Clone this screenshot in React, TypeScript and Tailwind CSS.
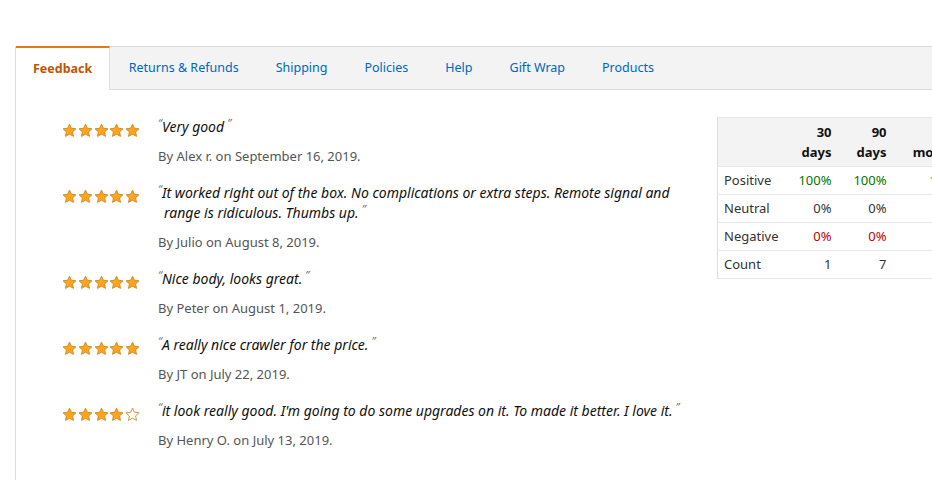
const TABS = ['Feedback', 'Returns & Refunds', 'Shipping', 'Policies', 'Help', 'Gift Wrap', 'Products']

type Review = { stars: number; text: string; by: string; date: string }

const REVIEWS: Review[] = [
  { stars: 5, text: 'Very good', by: 'Alex r.', date: 'September 16, 2019' },
  {
    stars: 5,
    text: 'It worked right out of the box. No complications or extra steps. Remote signal and range is ridiculous. Thumbs up.',
    by: 'Julio',
    date: 'August 8, 2019',
  },
  { stars: 5, text: 'Nice body, looks great.', by: 'Peter', date: 'August 1, 2019' },
  { stars: 5, text: 'A really nice crawler for the price.', by: 'JT', date: 'July 22, 2019' },
  {
    stars: 4,
    text: "it look really good. I'm going to do some upgrades on it. To made it better. I love it.",
    by: 'Henry O.',
    date: 'July 13, 2019',
  },
]

const ROWS = [
  { label: 'Positive', a: '100%', b: '100%', c: '100%', tone: 'text-[#007600]' },
  { label: 'Neutral', a: '0%', b: '0%', c: '0%', tone: 'text-[#333]' },
  { label: 'Negative', a: '0%', b: '0%', c: '0%', tone: 'text-[#c40000]' },
  { label: 'Count', a: '1', b: '7', c: '7', tone: 'text-[#333]' },
]

function Star({ filled }: { filled: boolean }) {
  return (
    <svg width="15" height="15" viewBox="0 0 24 24">
      <path
        d="M12 1.8l3.1 6.6 7.2.9-5.3 5 1.4 7.1L12 17.9l-6.4 3.5 1.4-7.1-5.3-5 7.2-.9z"
        fill={filled ? '#ffa41c' : '#fff'}
        stroke="#c9871f"
        strokeWidth="1.4"
        strokeLinejoin="round"
      />
    </svg>
  )
}

function Stars({ count }: { count: number }) {
  return (
    <div className="flex gap-[0.8px] pt-[6px]">
      {[0, 1, 2, 3, 4].map((i) => (
        <Star key={i} filled={i < count} />
      ))}
    </div>
  )
}

export default function App() {
  return (
    <div className="h-[480px] w-[932px] overflow-hidden bg-white pt-[46px] pl-[15px] font-['Noto_Sans','Open_Sans',sans-serif] text-[13px]">
      <div className="h-full border-l border-[#ddd]">
        {/* Tabs */}
        <div className="flex h-[44px] border-t border-b border-[#ddd] bg-[#f3f3f3] text-[12.5px]">
          {TABS.map((t, i) =>
            i === 0 ? (
              <div
                key={t}
                className="-mt-px -mb-px flex h-[44px] items-center border-t-2 border-r border-t-[#e47911] border-r-[#ddd] bg-white px-[17px] font-bold text-[#c45500]"
              >
                {t}
              </div>
            ) : (
              <div key={t} className="flex items-center px-[18.5px] text-[#0066c0]">
                {t}
              </div>
            )
          )}
        </div>

        <div className="flex pt-[27px]">
          {/* Reviews */}
          <div className="flex w-[701px] shrink-0 flex-col gap-[17px] pl-[46px]">
            {REVIEWS.map((r) => (
              <div key={r.by} className="flex">
                <div className="w-[96px] shrink-0">
                  <Stars count={r.stars} />
                </div>
                <div className="flex flex-col">
                  <p className="w-[530px] pl-[6px] -indent-[6px] text-[14px] leading-[19px] text-[#111] italic">
                    <span className="relative -top-[5px] text-[11px] text-[#777]">“</span>
                    {r.text}
                    <span className="relative -top-[5px] pl-[3px] text-[11px] text-[#777]">”</span>
                  </p>
                  <p className="mt-[10px] leading-[19px] text-[#555]">
                    By {r.by} on {r.date}.
                  </p>
                </div>
              </div>
            ))}
          </div>

          {/* Rating table */}
          <div className="shrink-0">
            <table className="w-[249px] table-fixed border-collapse border-l border-[#ddd] text-[#333]">
              <thead>
                <tr className="border-t border-b border-[#e7e7e7] bg-[#f3f3f3] text-[#111]">
                  <th className="w-[63px]" />
                  <th className="w-[55px] pt-[4px] pb-[4px] pr-[4px] text-right leading-[20px] font-bold">
                    30
                    <br />
                    days
                  </th>
                  <th className="w-[55px] pt-[4px] pb-[4px] pr-[4px] text-right leading-[20px] font-bold">
                    90
                    <br />
                    days
                  </th>
                  <th className="w-[76px] pt-[4px] pb-[4px] pr-[4px] text-right align-bottom leading-[20px] font-bold whitespace-nowrap">
                    months
                  </th>
                </tr>
              </thead>
              <tbody>
                {ROWS.map((row) => (
                  <tr key={row.label} className="h-[28px] border-b border-[#e7e7e7]">
                    <td className="pl-[6px]">{row.label}</td>
                    <td className={`pr-[4px] text-right ${row.tone}`}>{row.a}</td>
                    <td className={`pr-[4px] text-right ${row.tone}`}>{row.b}</td>
                    <td className={`pr-[4px] text-right whitespace-nowrap ${row.tone}`}>{row.c}</td>
                  </tr>
                ))}
              </tbody>
            </table>
          </div>
        </div>
      </div>
    </div>
  )
}
